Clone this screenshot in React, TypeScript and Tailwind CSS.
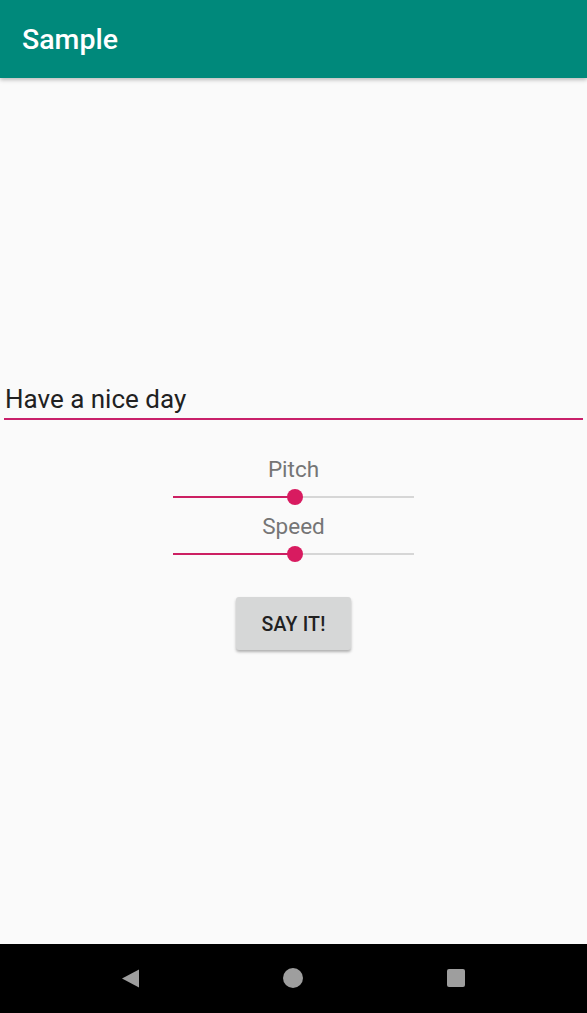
import React from "react";

function Slider() {
  return (
    <div className="relative h-[33px] w-[241px]">
      <div className="absolute left-0 right-0 top-[15px] h-[2px] bg-[#d6d6d6]" />
      <div className="absolute left-0 top-[15px] h-[2px] w-[122px] bg-[#cc1f62]" />
      <div className="absolute left-[114px] top-[8px] h-[16px] w-[16px] rounded-full bg-[#d81b60]" />
    </div>
  );
}

export default function App() {
  return (
    <div
      className="flex h-[1013px] w-[587px] flex-col overflow-hidden bg-[#fafafa]"
      style={{ fontFamily: "Roboto, 'Liberation Sans', sans-serif" }}
    >
      <header className="relative z-10 flex h-[78px] shrink-0 items-center bg-[#00897b] pl-[22px] pt-[3px] shadow-[0_2px_4px_rgba(0,0,0,0.25)]">
        <span className="text-[28.5px] font-medium leading-none text-white">Sample</span>
      </header>
      <main className="flex flex-1 flex-col bg-[#fafafa] pt-[305px]">
        <div className="mx-[4px] h-[37px] border-b-2 border-[#c8206a]">
          <div className="pl-[1px] text-[26px] leading-[32px] text-[#212121]">Have a nice day</div>
        </div>
        <div className="mt-[37px] flex flex-col items-center">
          <div className="h-[24px] text-[22.5px] leading-[24px] text-[#757575]">Pitch</div>
          <Slider />
          <div className="h-[24px] text-[22.5px] leading-[24px] text-[#757575]">Speed</div>
          <Slider />
          <button className="mt-[26px] flex h-[53px] w-[115px] items-center justify-center rounded-[3px] bg-[#d6d7d7] pt-[3px] text-[19.5px] font-medium tracking-[0.2px] text-[#212121] shadow-[0_2px_3px_rgba(0,0,0,0.3)]">
            SAY IT!
          </button>
        </div>
      </main>
      <nav className="relative h-[69px] shrink-0 bg-black">
        <svg className="absolute left-[121px] top-[25px]" width="19" height="19" viewBox="0 0 19 19">
          <path d="M18 0.5 L18 18.5 L1 9.5 Z" fill="#9e9e9e" />
        </svg>
        <div className="absolute left-[283px] top-[24px] h-[20px] w-[20px] rounded-full bg-[#9e9e9e]" />
        <div className="absolute left-[447px] top-[25px] h-[18px] w-[18px] rounded-[2px] bg-[#9e9e9e]" />
      </nav>
    </div>
  );
}
